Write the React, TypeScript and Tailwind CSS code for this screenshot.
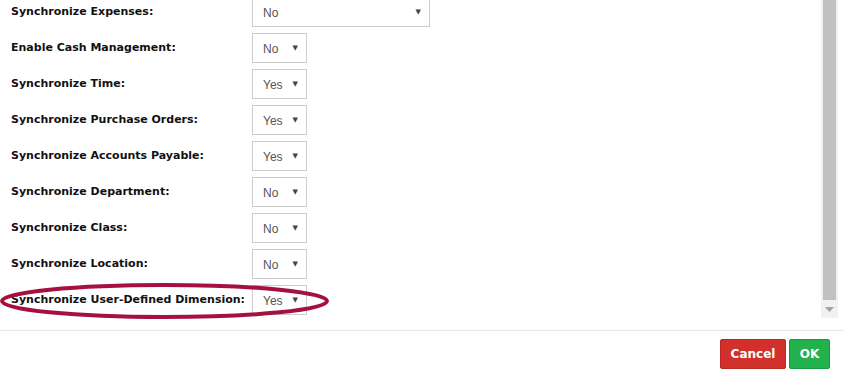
const rows: { label: string; value: string; wide?: boolean }[] = [
  { label: "Synchronize Expenses:", value: "No", wide: true },
  { label: "Enable Cash Management:", value: "No" },
  { label: "Synchronize Time:", value: "Yes" },
  { label: "Synchronize Purchase Orders:", value: "Yes" },
  { label: "Synchronize Accounts Payable:", value: "Yes" },
  { label: "Synchronize Department:", value: "No" },
  { label: "Synchronize Class:", value: "No" },
  { label: "Synchronize Location:", value: "No" },
  { label: "Synchronize User-Defined Dimension:", value: "Yes" },
]

const Select = ({ value, wide }: { value: string; wide?: boolean }) => {
  return (
    <div
      className={`flex h-[30px] items-center justify-between border border-[#ccc] bg-white pl-[10px] pr-[8px] ${wide ? "w-[178px]" : "w-[55px]"}`}
    >
      <span className="pt-[1px] text-[12px] text-[#555] font-['Liberation_Sans',Arial,sans-serif]">{value}</span>
      <span className="text-[7px] leading-none text-[#444]">▼</span>
    </div>
  )
}

const App = () => {
  return (
    <div className="relative h-[373px] w-[844px] overflow-hidden bg-white font-['DejaVu_Sans',Verdana,sans-serif]">
      <div className="flex h-[330px]">
        <div className="flex-1 overflow-hidden">
          <div className="mt-[-3px] flex flex-col gap-[6px] pl-[11px]">
            {rows.map((row) => (
              <div key={row.label} className="flex h-[30px] items-center">
                <label className="w-[241px] pt-[1px] text-[11px] font-bold text-[#111]">{row.label}</label>
                <Select value={row.value} wide={row.wide} />
              </div>
            ))}
          </div>
        </div>
        <div className="mr-[6px] flex h-[318px] w-[17px] flex-col bg-[#f1f1f1] px-[2px]">
          <div className="h-[300px] bg-[#c1c1c1]" />
          <div className="flex flex-1 items-center justify-center">
            <svg width="9" height="5" viewBox="0 0 9 5">
              <path d="M0 0 H9 L4.5 5 Z" fill="#a3a3a3" />
            </svg>
          </div>
        </div>
      </div>
      <div className="flex justify-end gap-[3px] border-t border-[#e8e8e8] pr-[14px] pt-[8px]">
        <button className="h-[30px] w-[66px] rounded-[2px] border border-[#b82824] bg-[#d2302b] text-[12px] font-bold text-white">
          Cancel
        </button>
        <button className="h-[30px] w-[41px] rounded-[2px] border border-[#1a9a40] bg-[#22b14c] text-[12px] font-bold text-white">
          OK
        </button>
      </div>
      <svg className="pointer-events-none absolute left-0 top-0" width="340" height="330">
        <ellipse cx="164.5" cy="301" rx="162.5" ry="16" fill="none" stroke="#a6103f" strokeWidth="4" />
      </svg>
    </div>
  )
}

export default App
